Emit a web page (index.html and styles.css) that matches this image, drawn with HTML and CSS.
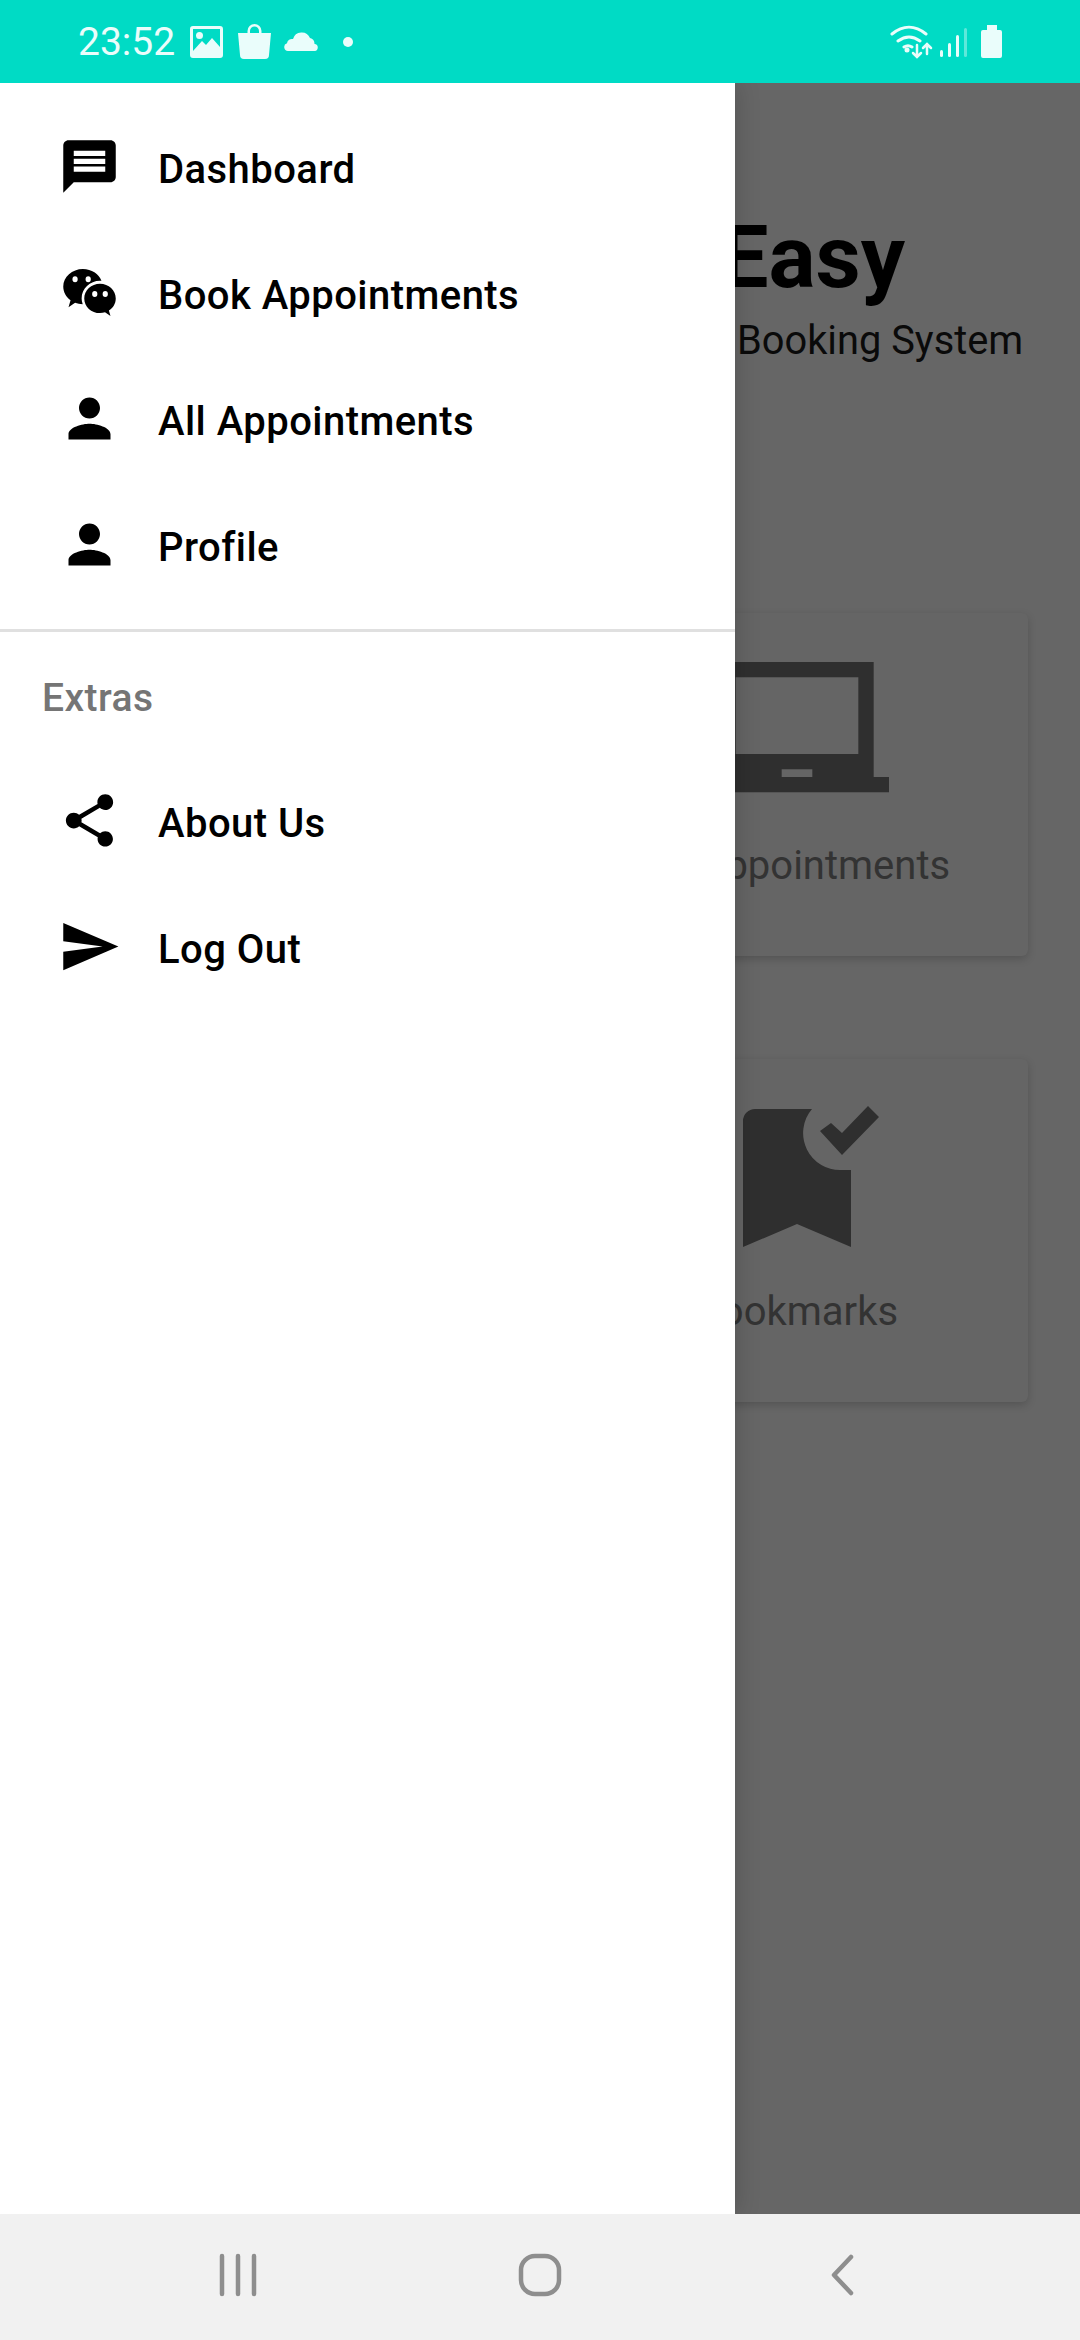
FILE: index.html
```html
<!DOCTYPE html>
<html lang="en">
<head>
    <meta charset="UTF-8">
    <meta name="viewport" content="width=device-width, initial-scale=1.0">
    <title>Easy</title>
    <link rel="stylesheet" href="styles.css">
</head>
<body>
    <div class="status-bar">
        <span class="time">23:52</span>
        <svg class="st-image" width="33" height="32" viewBox="0 0 33 32"><path fill-rule="evenodd" d="M3 0h27a3 3 0 0 1 3 3v26a3 3 0 0 1-3 3H3a3 3 0 0 1-3-3V3a3 3 0 0 1 3-3zM3 3v22l9-10 4 4 6-7 8 9V3zM9.500 6a3.500 3.500 0 1 1 0 7 3.500 3.500 0 0 1 0-7z"/></svg>
        <svg class="st-bag" width="33" height="35" viewBox="0 0 33 35"><path fill-rule="evenodd" d="M0 9h9.500V7a7 7 0 0 1 14 0v2H33l-2 22a4 4 0 0 1-4 4H6a4 4 0 0 1-4-4zM12 9h9V7a4.500 4.500 0 0 0-9 0z"/></svg>
        <svg class="st-cloud" width="34" height="20" viewBox="0 0 34 20"><path d="M4 20a4 4 0 0 1-1-7.800A5 5 0 0 1 9 8 9 9 0 0 1 26 7a6 6 0 0 1 4.500 6A3.500 3.500 0 0 1 30 20z"/></svg>
        <span class="st-dot"></span>
        <svg class="st-right" width="112" height="36" viewBox="890 23 112 36">
            <path class="wifi" d="M892 33c11-9 23-9 34 0M898 40c7-5 15-5 22 0M904 46c3-2 5-2 8 0"/>
            <circle cx="907" cy="49" r="2.500"/>
            <path class="arrows" d="M917 44v11M913 52l4 4 4-4M927 53V43M923 47l4-4 4 4"/>
            <rect x="940" y="49" width="3" height="7" rx="1.500"/>
            <rect x="948" y="42" width="3" height="14" rx="1.500"/>
            <rect x="956" y="34" width="3" height="22" rx="1.500"/>
            <rect class="dim" x="964" y="27" width="3" height="29" rx="1.500"/>
            <path d="M987 24h10v5h3a2 2 0 0 1 2 2v24a2 2 0 0 1-2 2h-17a2 2 0 0 1-2-2V31a2 2 0 0 1 2-2h4z"/>
        </svg>
    </div>

    <div class="main">
        <div class="drawer">
            <ul class="menu">
                <li>
                    <svg class="icon" viewBox="0 0 24 24"><path d="M20 2H4c-1.100 0-1.990.900-1.990 2L2 22l4-4h14c1.100 0 2-.900 2-2V4c0-1.100-.900-2-2-2zm-2 12H6v-2h12v2zm0-3H6V9h12v2zm0-3H6V6h12v2z"/></svg>
                    <span class="menu-label">Dashboard</span>
                </li>
                <li>
                    <svg class="icon" viewBox="0 0 24 24"><path transform="translate(0 -1.440) scale(1 1.120)" d="M9.500 4C5.360 4 2 6.690 2 10c0 1.890 1.080 3.560 2.780 4.660L4 17l2.500-1.500c.890.310 1.870.500 2.910.500A5.600 5.600 0 0 1 9 14c0-3.310 3.130-6 7-6 .190 0 .380 0 .560.030C15.540 5.690 12.780 4 9.500 4zm-3 2.500a1 1 0 1 1 0 2 1 1 0 0 1 0-2zm5 0a1 1 0 1 1 0 2 1 1 0 0 1 0-2zM16 9c-3.310 0-6 2.240-6 5s2.690 5 6 5c.670 0 1.310-.080 1.910-.250L20 20l-.620-1.870C21 17.220 22 15.710 22 14c0-2.760-2.690-5-6-5zm-2 2.500a1 1 0 1 1 0 2 1 1 0 0 1 0-2zm4 0a1 1 0 1 1 0 2 1 1 0 0 1 0-2z"/></svg>
                    <span class="menu-label">Book Appointments</span>
                </li>
                <li>
                    <svg class="icon" viewBox="0 0 24 24"><path d="M12 12c2.210 0 4-1.790 4-4s-1.790-4-4-4-4 1.790-4 4 1.790 4 4 4zm0 2c-2.670 0-8 1.340-8 4v2h16v-2c0-2.660-5.330-4-8-4z"/></svg>
                    <span class="menu-label">All Appointments</span>
                </li>
                <li>
                    <svg class="icon" viewBox="0 0 24 24"><path d="M12 12c2.210 0 4-1.790 4-4s-1.790-4-4-4-4 1.790-4 4 1.790 4 4 4zm0 2c-2.670 0-8 1.340-8 4v2h16v-2c0-2.660-5.330-4-8-4z"/></svg>
                    <span class="menu-label">Profile</span>
                </li>
            </ul>
            <div class="divider"></div>
            <div class="subheader">Extras</div>
            <ul class="menu">
                <li>
                    <svg class="icon" viewBox="0 0 24 24"><path d="M18 16.080c-.760 0-1.440.300-1.960.770L8.910 12.700c.050-.230.090-.460.090-.700s-.040-.470-.090-.700l7.050-4.110c.540.500 1.250.810 2.040.810 1.660 0 3-1.340 3-3s-1.340-3-3-3-3 1.340-3 3c0 .240.040.470.090.700L8.040 9.810C7.500 9.310 6.790 9 6 9c-1.660 0-3 1.340-3 3s1.340 3 3 3c.790 0 1.500-.310 2.040-.810l7.120 4.160c-.050.210-.080.430-.080.650 0 1.610 1.310 2.920 2.920 2.920s2.920-1.310 2.920-2.920-1.310-2.920-2.920-2.920z"/></svg>
                    <span class="menu-label">About Us</span>
                </li>
                <li>
                    <svg class="icon" viewBox="0 0 24 24"><path d="M2.010 21L23 12 2.010 3 2 10l15 2-15 2z"/></svg>
                    <span class="menu-label">Log Out</span>
                </li>
            </ul>
        </div>

        <div class="backdrop">
            <div class="app-title">Easy</div>
            <div class="app-subtitle">Booking System</div>
            <div class="cards">
                <div class="card">
                    <svg class="card-icon" viewBox="0 0 24 24"><path fill-rule="evenodd" d="M0 20h24v-2h-2V3H2v15H0zM4 5h16v10H4zM10 17h4v1h-4z"/></svg>
                    <div class="card-label">All Appointments</div>
                </div>
                <div class="card">
                    <svg class="card-icon" viewBox="705 1084 184 184"><path d="M755 1108h57a37 37 0 0 0 30 61h9v77l-54-23-54 23v-126a12 12 0 0 1 12-12z"/><path d="M820 1130l11-8 11 10 26-27 11 11-37 38z"/></svg>
                    <div class="card-label">Bookmarks</div>
                </div>
            </div>
        </div>
    </div>

    <div class="nav-bar">
        <div class="nav-slot">
            <svg width="40" height="44" viewBox="0 0 40 44"><path d="M4 3v38M20 3v38M36 3v38"/></svg>
        </div>
        <div class="nav-slot">
            <svg width="44" height="44" viewBox="0 0 44 44"><rect x="3" y="3" width="38" height="38" rx="14"/></svg>
        </div>
        <div class="nav-slot">
            <svg width="24" height="44" viewBox="0 0 24 44"><path d="M21 4L4 22l17 18"/></svg>
        </div>
    </div>
</body>
</html>
```

FILE: styles.css
```css
* {
    box-sizing: border-box;
}
body {
    font-family: Roboto, sans-serif;
    margin: 0;
    padding: 0;
    width: 1080px;
    height: 2340px;
    display: flex;
    flex-direction: column;
    overflow: hidden;
}

/* status bar */
.status-bar {
    height: 83px;
    flex: none;
    background-color: #00dbc5;
    color: #eafdfb;
    display: flex;
    align-items: center;
    padding: 0 0 0 78px;
    position: relative;
    z-index: 2;
}
.status-bar svg {
    fill: #eafdfb;
    flex: none;
}
.time {
    font-size: 39px;
    width: 96px;
}
.st-image {
    margin-left: 16px;
}
.st-bag {
    margin-left: 15px;
}
.st-cloud {
    margin-left: 13px;
    margin-top: -1px;
}
.st-dot {
    width: 10px;
    height: 10px;
    border-radius: 50%;
    background-color: #eafdfb;
    margin-left: 25px;
}
.st-right {
    margin-left: auto;
    margin-right: 78px;
}
.st-right .wifi,
.st-right .arrows {
    fill: none;
    stroke: #eafdfb;
    stroke-width: 3;
    stroke-linecap: round;
}
.st-right .arrows {
    stroke-width: 2.500;
}
.st-right .dim {
    opacity: 0.4;
}

/* drawer + dimmed page */
.main {
    flex: 1;
    display: flex;
    min-height: 0;
}
.drawer {
    width: 735px;
    flex: none;
    background-color: #fff;
    padding-top: 20px;
    position: relative;
    z-index: 1;
    box-shadow: 0 0 24px rgba(0, 0, 0, 0.2);
}
.menu {
    list-style-type: none;
    margin: 0;
    padding: 0;
}
.menu li {
    height: 126px;
    display: flex;
    align-items: center;
    padding-left: 58px;
    font-size: 40px;
    font-weight: 475;
    letter-spacing: 0.45px;
    color: #000;
}
.menu-label {
    padding-top: 6px;
}
.icon {
    width: 63px;
    height: 63px;
    margin-right: 37px;
    flex: none;
}
.divider {
    height: 3px;
    margin-top: 22px;
    background-color: #e0e0e0;
}
.subheader {
    height: 125px;
    display: flex;
    align-items: center;
    padding: 6px 0 0 42px;
    font-size: 39px;
    font-weight: 475;
    letter-spacing: 0.45px;
    color: #757575;
}
.backdrop {
    flex: 1;
    min-width: 0;
    overflow: hidden;
    background-color: #666;
    padding-top: 124px;
    white-space: nowrap;
}
.app-title {
    font-size: 88px;
    font-weight: 700;
    line-height: 100px;
    color: #000;
    margin-left: -16px;
}
.app-subtitle {
    font-size: 39.8px;
    line-height: 46px;
    color: #0a0a0a;
    margin-top: 11px;
    margin-left: 2px;
}
.cards {
    width: 462px;
    margin: 249px 0 0 -169px;
    display: flex;
    flex-direction: column;
    gap: 103px;
}
.card {
    background-color: #656565;
    border-radius: 6px;
    box-shadow: 0 3px 9px rgba(0, 0, 0, 0.18);
    padding: 26px 0 67px;
    text-align: center;
}
.card-icon {
    display: block;
    width: 184px;
    height: 184px;
    margin: 0 auto;
    fill: #2f2f2f;
}
.card-label {
    font-size: 40px;
    line-height: 46px;
    margin-top: 20px;
    color: #333;
}

/* bottom navigation */
.nav-bar {
    height: 126px;
    flex: none;
    background-color: #f1f1f1;
    display: flex;
    justify-content: center;
    align-items: center;
    padding-bottom: 5px;
    position: relative;
    z-index: 2;
}
.nav-slot {
    width: 302px;
    display: flex;
    justify-content: center;
}
.nav-bar svg {
    fill: none;
    stroke: #8e8e8e;
    stroke-width: 4.500;
    stroke-linecap: round;
    stroke-linejoin: round;
}
```
